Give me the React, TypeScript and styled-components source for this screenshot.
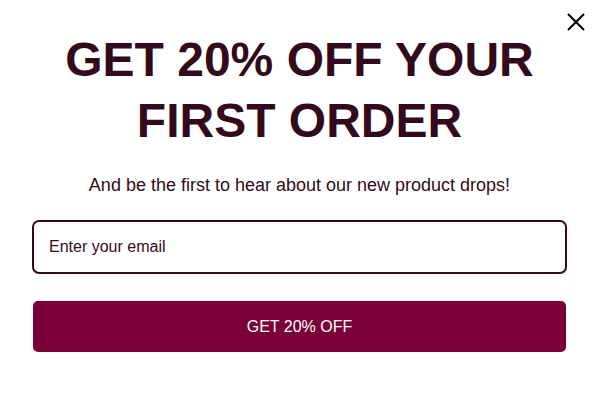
import { FC } from 'react'
import styled, { createGlobalStyle } from 'styled-components'

const GlobalStyle = createGlobalStyle`
	html, body {
		margin: 0;
		padding: 0;
		background: #ffffff;
	}
	body {
		font-family: 'Liberation Sans', Arial, sans-serif;
	}
`

const Popup = styled.div`
	position: relative;
	width: 599px;
	height: 405px;
	box-sizing: border-box;
	padding: 29px 33px 0 33px;
	display: flex;
	flex-direction: column;
	align-items: stretch;
	background: #ffffff;
`

const CloseButton = styled.button`
	position: absolute;
	top: 12px;
	right: 13px;
	width: 20px;
	height: 20px;
	padding: 0;
	border: none;
	background: transparent;
	cursor: pointer;
	display: flex;
	align-items: center;
	justify-content: center;
`

const Heading = styled.h1`
	margin: 0;
	text-align: center;
	color: #330a1c;
	font-size: 48px;
	font-weight: 700;
	line-height: 61px;
`

const Subtitle = styled.p`
	margin: 23px 0 0;
	text-align: center;
	color: #330a1c;
	font-size: 18px;
	line-height: 22px;
`

const EmailInput = styled.input`
	margin: 24px -1px 0;
	height: 54px;
	box-sizing: border-box;
	padding: 0 15px;
	border: 2px solid #330a1c;
	border-radius: 7px;
	font-family: 'Liberation Sans', Arial, sans-serif;
	font-size: 16px;
	color: #330a1c;
	outline: none;
	&::placeholder {
		color: #330a1c;
		opacity: 1;
	}
`

const SubmitButton = styled.button`
	margin: 27px 0 0;
	height: 51px;
	border: none;
	border-radius: 5px;
	background: #7a0037;
	color: #ffffff;
	font-family: 'Liberation Sans', Arial, sans-serif;
	font-size: 16px;
	cursor: pointer;
`

const App: FC = () => {
	return (
		<>
			<GlobalStyle />
			<Popup>
				<CloseButton aria-label="Close">
					<svg width="18" height="18" viewBox="0 0 18 18">
						<path d="M1 1 L17 17 M17 1 L1 17" stroke="#000" strokeWidth="2" />
					</svg>
				</CloseButton>
				<Heading>
					GET 20% OFF YOUR
					<br />
					FIRST ORDER
				</Heading>
				<Subtitle>And be the first to hear about our new product drops!</Subtitle>
				<EmailInput type="email" placeholder="Enter your email" />
				<SubmitButton>GET 20% OFF</SubmitButton>
			</Popup>
		</>
	)
}

export default App
